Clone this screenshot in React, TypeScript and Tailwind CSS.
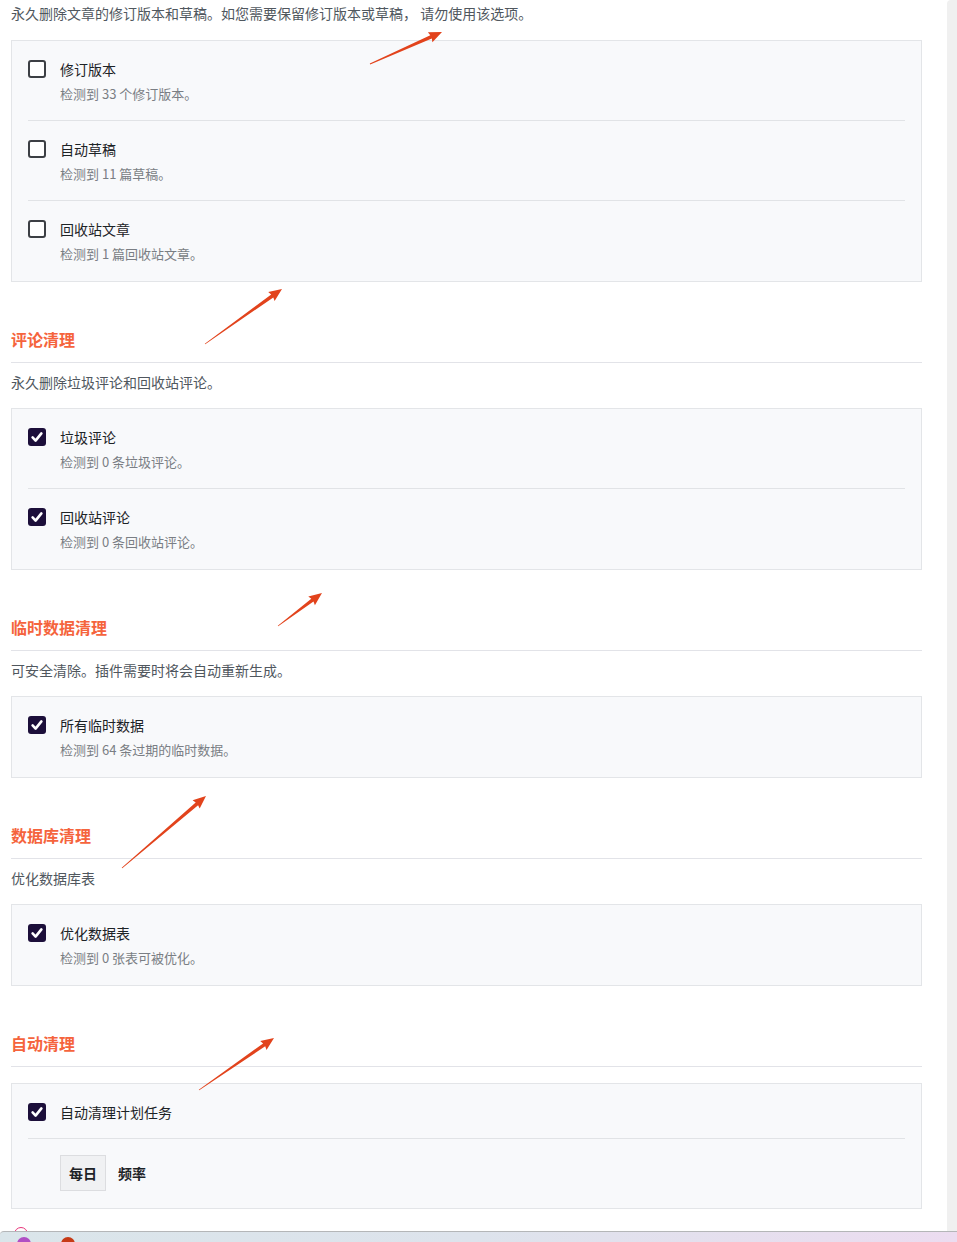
import React from 'react';

type Item = { label: string; sub?: string; checked: boolean };

const font = { fontFamily: '"Noto Sans CJK SC", "Noto Sans", sans-serif' };

function Checkbox({ checked }: { checked: boolean }) {
    if (checked) {
        return (
            <div className="w-[18px] h-[18px] rounded-[3px] bg-[#1c0f3a] flex items-center justify-center shrink-0">
                <svg width="18" height="18" viewBox="0 0 18 18">
                    <path d="M4.6 9.4 L7.6 12.6 L13.4 5.4" fill="none" stroke="#fff" strokeWidth="2.6" strokeLinecap="round" strokeLinejoin="round" />
                </svg>
            </div>
        );
    }
    return <div className="w-[18px] h-[18px] rounded-[3px] border-2 border-[#3c3f44] bg-white shrink-0" />;
}

function Row({ item, last }: { item: Item; last: boolean }) {
    return (
        <div className={`mx-4 pt-[18px] ${last ? 'pb-[17px]' : 'pb-4 border-b border-[#e1e3e6]'}`}>
            <div className="flex items-center gap-[14px] h-5">
                <Checkbox checked={item.checked} />
                <span className="text-[14px] leading-5 text-[#1d2327]">{item.label}</span>
            </div>
            {item.sub && <div className="pl-8 mt-[5px] text-[13px] leading-5 text-[#7a7e84]">{item.sub}</div>}
        </div>
    );
}

function Box({ items }: { items: Item[] }) {
    return (
        <div className="border border-[#e3e5e8] bg-[#f8f9fb]">
            {items.map((it, i) => (
                <Row key={it.label} item={it} last={i === items.length - 1} />
            ))}
        </div>
    );
}

function Heading({ title }: { title: string }) {
    return (
        <div className="mt-[45px] pb-[11px] border-b border-[#e2e3e8]">
            <h2 className="text-[16px] leading-6 font-semibold text-[#f5643d]">{title}</h2>
        </div>
    );
}

function Desc({ children }: { children: React.ReactNode }) {
    return <p className="mt-[9px] mb-4 text-[14px] leading-5 text-[#50575e]">{children}</p>;
}

function Arrow({ x1, y1, x2, y2 }: { x1: number; y1: number; x2: number; y2: number }) {
    const dx = x2 - x1;
    const dy = y2 - y1;
    const len = Math.hypot(dx, dy);
    const ux = dx / len;
    const uy = dy / len;
    const nx = -uy;
    const ny = ux;
    const headLen = 12;
    const bx = x2 - ux * headLen;
    const by = y2 - uy * headLen;
    const p = (x: number, y: number) => `${x.toFixed(1)},${y.toFixed(1)}`;
    const pts = [
        p(x1 + nx * 0.4, y1 + ny * 0.4),
        p(bx + nx * 1.8, by + ny * 1.8),
        p(bx - ux * 1 + nx * 5.5, by - uy * 1 + ny * 5.5),
        p(x2, y2),
        p(bx - ux * 1 - nx * 5.5, by - uy * 1 - ny * 5.5),
        p(bx - nx * 1.8, by - ny * 1.8),
        p(x1 - nx * 0.4, y1 - ny * 0.4),
    ].join(' ');
    return <polygon points={pts} fill="#e2431c" />;
}

export default function App() {
    return (
        <div className="relative h-[1242px] w-[957px] overflow-hidden bg-white flex flex-col" style={font}>
            <div className="flex flex-1 min-h-0">
                <div className="flex-1 pl-[11px] pr-[25px] pt-[3px]">
                    <p className="text-[14px] leading-5 text-[#50575e]">永久删除文章的修订版本和草稿。如您需要保留修订版本或草稿， 请勿使用该选项。</p>
                    <div className="mt-[17px]">
                        <Box
                            items={[
                                { label: '修订版本', sub: '检测到 33 个修订版本。', checked: false },
                                { label: '自动草稿', sub: '检测到 11 篇草稿。', checked: false },
                                { label: '回收站文章', sub: '检测到 1 篇回收站文章。', checked: false },
                            ]}
                        />
                    </div>

                    <Heading title="评论清理" />
                    <Desc>永久删除垃圾评论和回收站评论。</Desc>
                    <Box
                        items={[
                            { label: '垃圾评论', sub: '检测到 0 条垃圾评论。', checked: true },
                            { label: '回收站评论', sub: '检测到 0 条回收站评论。', checked: true },
                        ]}
                    />

                    <Heading title="临时数据清理" />
                    <Desc>可安全清除。插件需要时将会自动重新生成。</Desc>
                    <Box items={[{ label: '所有临时数据', sub: '检测到 64 条过期的临时数据。', checked: true }]} />

                    <Heading title="数据库清理" />
                    <Desc>优化数据库表</Desc>
                    <Box items={[{ label: '优化数据表', sub: '检测到 0 张表可被优化。', checked: true }]} />

                    <Heading title="自动清理" />
                    <div className="mt-4 border border-[#e3e5e8] bg-[#f8f9fb]">
                        <div className="mx-4 pt-[18px] pb-4 border-b border-[#e1e3e6]">
                            <div className="flex items-center gap-[14px] h-5">
                                <Checkbox checked />
                                <span className="text-[14px] leading-5 text-[#1d2327]">自动清理计划任务</span>
                            </div>
                        </div>
                        <div className="pl-[48px] pt-4 pb-[17px] flex items-center gap-3">
                            <div className="h-9 px-2 flex items-center border border-[#dcdde0] bg-[#f0f1f3] text-[14px] font-bold text-[#1d2327]">每日</div>
                            <span className="text-[14px] font-bold text-[#1d2327]">频率</span>
                        </div>
                    </div>
                    <div className="mt-[18px] ml-[3px] w-[14px] h-[14px] rounded-full border border-[#e8357a]" />
                </div>
                <div className="w-[10px] bg-[#f0f0f0] rounded-tl-[4px]" />
            </div>

            {/* taskbar strip */}
            <div className="h-[11px] shrink-0 border-t border-[#b4b6b8] bg-gradient-to-r from-[#dae5ea] via-[#dde3ec] to-[#ecdcf0] rounded-tl-[4px] relative">
                <div className="absolute left-[17px] top-[5px] w-[14px] h-[14px] rounded-full bg-[#b04fc4]" />
                <div className="absolute left-[61px] top-[5px] w-[14px] h-[14px] rounded-full bg-[#c63a16]" />
            </div>

            <svg className="absolute inset-0 pointer-events-none" width="957" height="1242">
                <Arrow x1={370} y1={64} x2={442} y2={32} />
                <Arrow x1={205} y1={344} x2={282} y2={289} />
                <Arrow x1={278} y1={626} x2={322} y2={593} />
                <Arrow x1={122} y1={868} x2={206} y2={796} />
                <Arrow x1={199} y1={1090} x2={274} y2={1038} />
            </svg>
        </div>
    );
}
